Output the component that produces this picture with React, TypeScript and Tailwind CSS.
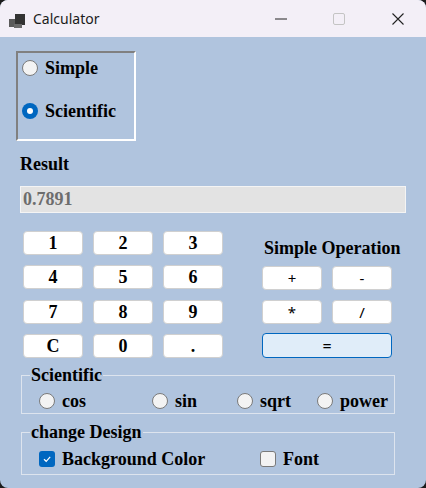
import React from "react";

const Radio: React.FC<{ checked?: boolean; label: string }> = ({ checked, label }) => (
  <div className="flex items-center h-[20px]">
    {checked ? (
      <span className="w-[16px] h-[16px] rounded-full bg-[#0067C0] flex items-center justify-center">
        <span className="w-[6px] h-[6px] rounded-full bg-white" />
      </span>
    ) : (
      <span className="w-[16px] h-[16px] rounded-full bg-[#F3F3F3] border border-[#7A7A7A]" />
    )}
    <span className="ml-[7px] font-bold text-[18px] text-black leading-none">{label}</span>
  </div>
);

const Check: React.FC<{ checked?: boolean; label: string }> = ({ checked, label }) => (
  <div className="flex items-center h-[20px]">
    {checked ? (
      <span className="w-[16px] h-[16px] rounded-[3px] bg-[#0067C0] flex items-center justify-center">
        <svg width="10" height="10" viewBox="0 0 10 10">
          <path d="M2 5.2 L4.2 7.3 L8.2 2.8" stroke="white" strokeWidth="1.2" fill="none" />
        </svg>
      </span>
    ) : (
      <span className="w-[16px] h-[16px] rounded-[3px] bg-[#F3F3F3] border border-[#7A7A7A]" />
    )}
    <span className="ml-[7px] font-bold text-[18px] text-black leading-none">{label}</span>
  </div>
);

const Key: React.FC<{ label: string }> = ({ label }) => (
  <button className="w-[60px] h-[24px] bg-white border border-[#D0D0D0] rounded-[4px] flex items-center justify-center font-bold text-[18px] text-black leading-none">
    {label}
  </button>
);

const OpKey: React.FC<{ label: string }> = ({ label }) => (
  <button className="w-[60px] h-[24px] bg-white border border-[#D0D0D0] rounded-[4px] flex items-center justify-center font-[family-name:'Noto_Sans',sans-serif] text-[15px] text-black leading-none">
    {label}
  </button>
);

export default function App() {
  const keys = ["1", "2", "3", "4", "5", "6", "7", "8", "9", "C", "0", "."];
  return (
    <div className="w-[426px] h-[488px] bg-[#1c1c1c]">
      <div className="w-full h-full rounded-[8px] overflow-hidden flex flex-col bg-[#B0C4DE] font-[family-name:'Liberation_Serif','Times_New_Roman',serif]">
        {/* Title bar */}
        <div className="h-[37px] bg-[#F3EFF7] flex items-center shrink-0">
          <svg width="26" height="26" viewBox="0 0 26 26" className="ml-[3px]">
            <rect x="6" y="13" width="6" height="8" fill="#5a5a5a" />
            <rect x="12" y="8" width="10" height="11" fill="#333" />
            <rect x="11" y="18" width="8" height="4" fill="#6a6a6a" />
          </svg>
          <span className="ml-[4px] font-[family-name:'Noto_Sans',sans-serif] text-[14px] text-[#1a1a1a]">Calculator</span>
          <div className="ml-auto flex items-center">
            <svg width="12" height="12" viewBox="0 0 12 12" className="mr-[46px]">
              <path d="M0 6 H12" stroke="#222" strokeWidth="1" />
            </svg>
            <svg width="12" height="12" viewBox="0 0 12 12" className="mr-[47px]">
              <rect x="0.5" y="0.5" width="11" height="11" rx="1.5" fill="none" stroke="#C4C4C4" />
            </svg>
            <svg width="12" height="12" viewBox="0 0 12 12" className="mr-[22px]">
              <path d="M0.5 0.5 L11.5 11.5 M11.5 0.5 L0.5 11.5" stroke="#222" strokeWidth="1.1" />
            </svg>
          </div>
        </div>

        {/* Mode box */}
        <div className="mt-[14px] ml-[16px] w-[120px] h-[90px] border-2 border-t-[#808080] border-l-[#808080] border-r-white border-b-white flex flex-col pl-[4px] pt-[5px] gap-[23px]">
          <Radio label="Simple" />
          <Radio checked label="Scientific" />
        </div>

        {/* Result */}
        <div className="mt-[13px] ml-[20px] h-[20px] flex items-center font-bold text-[18px] text-black">Result</div>
        <div className="mt-[12px] ml-[20px] w-[386px] h-[27px] bg-[#E3E3E3] border border-[#F4F4F4] flex items-center pl-[2px] font-bold text-[18px] text-[#6D6D6D]">
          0.7891
        </div>

        {/* Keypad + operations */}
        <div className="mt-[18px] ml-[23px] flex">
          <div className="grid grid-cols-[60px_60px_60px] gap-[10px]">
            {keys.map((k) => (
              <Key key={k} label={k} />
            ))}
          </div>
          <div className="ml-[39px] flex flex-col">
            <div className="h-[35px] flex items-center pl-[2px] font-bold text-[18px] text-black">Simple Operation</div>
            <div className="grid grid-cols-[60px_60px] gap-[10px]">
              <OpKey label="+" />
              <OpKey label="-" />
              <OpKey label="*" />
              <OpKey label="/" />
            </div>
            <button className="mt-[9px] w-[130px] h-[25px] bg-[#E0EDF9] border border-[#0067C0] rounded-[4px] flex items-center justify-center font-[family-name:'Noto_Sans',sans-serif] text-[16px] text-black leading-none">
              =
            </button>
          </div>
        </div>

        {/* Scientific */}
        <fieldset className="mt-[7px] ml-[21px] w-[374px] border border-[#DDE4EE] pl-[17px] pt-[6px] pb-[2px]">
          <legend className="ml-[-9px] px-[1px] font-bold text-[18px] text-black leading-[20px]">Scientific</legend>
          <div className="flex">
            <div className="w-[113px]"><Radio label="cos" /></div>
            <div className="w-[85px]"><Radio label="sin" /></div>
            <div className="w-[80px]"><Radio label="sqrt" /></div>
            <div><Radio label="power" /></div>
          </div>
        </fieldset>

        {/* Design */}
        <fieldset className="mt-[8px] ml-[21px] w-[374px] border border-[#DDE4EE] pl-[17px] pt-[7px] pb-[5px]">
          <legend className="ml-[-9px] px-[1px] font-bold text-[18px] text-black leading-[20px]">change Design</legend>
          <div className="flex">
            <div className="w-[221px]"><Check checked label="Background Color" /></div>
            <div><Check label="Font" /></div>
          </div>
        </fieldset>
      </div>
    </div>
  );
}
